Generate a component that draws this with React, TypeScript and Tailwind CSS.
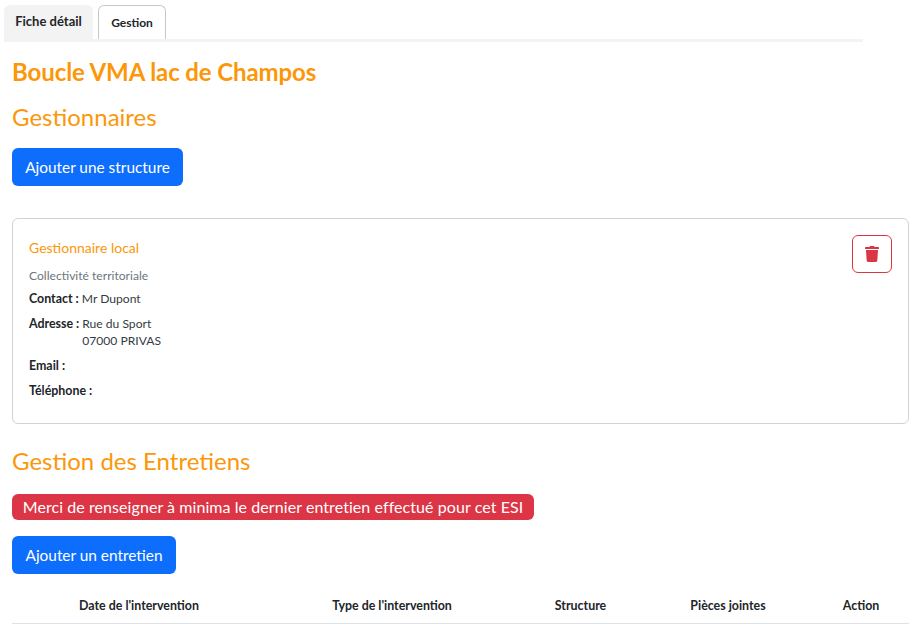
import type { ReactNode } from "react";

const heading = "font-['Lato',sans-serif] text-[#fb9709]";

function InfoLine({ label, children }: { label: string; children?: ReactNode }) {
  return (
    <div className="flex gap-[3px] text-[12.4px] leading-[17px] mb-2">
      <span className="font-bold text-[#212529]">{label} :</span>
      <div className="text-[12.1px] text-[#333c45]">{children}</div>
    </div>
  );
}

export default function App() {
  return (
    <div className="h-[635px] overflow-hidden bg-white font-['Lato',sans-serif] text-[#212529]">
      {/* Tabs */}
      <div className="ml-1 w-[859px] h-[42px] pt-[5px] flex gap-[5px] items-start border-b-[3px] border-[#f3f3f3]">
        <div className="w-[89px] h-[34px] bg-[#f3f3f3] rounded-t-[6px] text-[13px] font-bold text-center pt-[8px] leading-[16px]">
          Fiche détail
        </div>
        <div className="w-[68px] h-[34px] border border-b-0 border-[#c8c8c8] rounded-t-[6px] text-[12px] font-bold text-center pt-[9px] leading-[16px]">
          Gestion
        </div>
      </div>

      <div className="px-3">
        <h1 className={`${heading} text-[24px] font-bold leading-[30px] mt-[15px] tracking-[-0.1px]`}>
          Boucle VMA lac de Champos
        </h1>
        <h2 className={`${heading} text-[24px] leading-[30px] mt-[15px]`}>Gestionnaires</h2>

        <button className="mt-[16px] h-[38px] w-[171px] pt-[2px] bg-[#0d6efd] text-white rounded-[6px] text-[15.4px]">
          Ajouter une structure
        </button>

        {/* Carte gestionnaire */}
        <div className="mt-[32px] w-[897px] h-[206px] border border-[#d2d2d2] rounded-[6px] px-4 pt-4 flex justify-between">
          <div>
            <div className="text-[#fb9709] text-[14px] leading-[26px]">Gestionnaire local</div>
            <div className="text-[#6c757d] text-[12.1px] leading-[17px] mt-[6px] mb-[6px]">Collectivité territoriale</div>
            <InfoLine label="Contact">Mr Dupont</InfoLine>
            <InfoLine label="Adresse">
              Rue du Sport
              <br />
              07000 PRIVAS
            </InfoLine>
            <InfoLine label="Email" />
            <InfoLine label="Téléphone" />
          </div>
          <button className="w-10 h-[38px] border border-[#dc3545] rounded-[6px] flex items-center justify-center text-[#dc3545]">
            <svg width="14" height="16" viewBox="0 0 448 512" fill="currentColor">
              <path d="M432 32H312l-9.4-18.7A24 24 0 0 0 281.1 0H166.8a23.72 23.72 0 0 0-21.4 13.3L136 32H16A16 16 0 0 0 0 48v32a16 16 0 0 0 16 16h416a16 16 0 0 0 16-16V48a16 16 0 0 0-16-16zM53.2 467a48 48 0 0 0 47.9 45h245.8a48 48 0 0 0 47.9-45L416 128H32z" />
            </svg>
          </button>
        </div>

        <h2 className={`${heading} text-[24px] leading-[30px] mt-[22px]`}>Gestion des Entretiens</h2>

        <div className="mt-[18px] w-[522px] h-[26px] bg-[#dc3545] text-white rounded-[6px] text-[16px] leading-[26px] text-center tracking-[0.07px]">
          Merci de renseigner à minima le dernier entretien effectué pour cet ESI
        </div>

        <button className="mt-[16px] block h-[38px] w-[164px] pt-[2px] bg-[#0d6efd] text-white rounded-[6px] text-[15.4px]">
          Ajouter un entretien
        </button>

        {/* Table */}
        <div className="mt-[14px] w-[897px] h-[36px] pt-[2px] grid grid-cols-[254px_252px_125px_170px_96px] items-center border-b border-[#dee2e6] text-[12.4px] font-bold text-center">
          <div>Date de l'intervention</div>
          <div>Type de l'intervention</div>
          <div>Structure</div>
          <div>Pièces jointes</div>
          <div>Action</div>
        </div>
      </div>
    </div>
  );
}
